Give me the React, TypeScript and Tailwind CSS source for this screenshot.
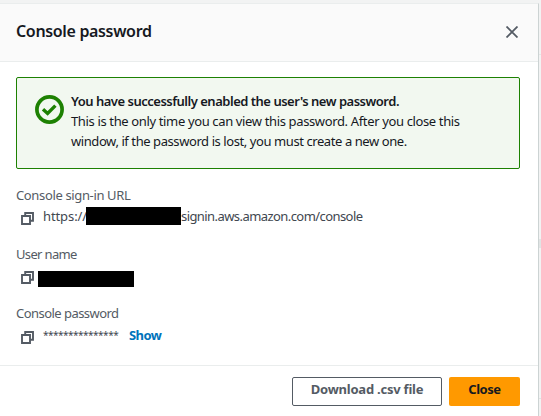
import React from "react";

function CopyIcon() {
  return (
    <svg width="13" height="13" viewBox="0 0 13 13" fill="none" stroke="#545b64" strokeWidth="1.9" className="shrink-0">
      <path d="M1 4h8v8H1z" />
      <path d="M4.2 4V1H12v7.8H9" />
    </svg>
  );
}

function Field({ label, tracking, children }: { label: string; tracking: string; children: React.ReactNode }) {
  return (
    <div className="h-[59px]">
      <div className={`h-5 whitespace-nowrap text-[13px] leading-5 text-[#545b64] ${tracking}`}>{label}</div>
      <div className="flex h-[26px] pl-[5px]">{children}</div>
    </div>
  );
}

export default function App() {
  return (
    <div className="flex h-[416px] w-[541px] overflow-hidden bg-[#f2f3f3] pt-[3px] font-['Noto_Sans','Open_Sans',sans-serif]">
      <div className="flex w-[539px] shrink-0 flex-col border-t border-r border-t-[#eaeded] border-r-[#ccd3d3] bg-white">
        <header className="flex h-[58px] shrink-0 items-start justify-between border-b border-[#eaeded] bg-[#fafafa] pl-4 pr-[20px]">
          <h1 className="mt-[15px] text-[16px] font-semibold leading-6 tracking-[-0.34px] text-[#16191f]">Console password</h1>
          <svg width="12" height="12" viewBox="0 0 12 12" stroke="#545b64" strokeWidth="1.8" className="mt-[22px]">
            <path d="M.5.5l11 11M11.5.5l-11 11" />
          </svg>
        </header>
        <main className="h-[303px] shrink-0 px-4 pt-[15px]">
          <section className="flex h-[92px] w-[504px] rounded-[2px] border border-[#1d8102] bg-[#f2f8f0] pl-[18px] pt-[13px]">
            <svg width="29" height="29" viewBox="0 0 29 29" fill="none" stroke="#1d8102" className="mt-[4px] shrink-0">
              <circle cx="14.5" cy="14.5" r="12.6" strokeWidth="3.7" />
              <path d="M8 14.2l4.6 4.2 7.8-7.8" strokeWidth="3.4" />
            </svg>
            <div className="ml-[7px] whitespace-nowrap text-[13px] leading-5 text-[#16191f]">
              <p className="font-semibold tracking-[-0.49px]">You have successfully enabled the user's new password.</p>
              <p className="tracking-[-0.36px]">This is the only time you can view this password. After you close this</p>
              <p className="tracking-[-0.42px]">window, if the password is lost, you must create a new one.</p>
            </div>
          </section>
          <div className="pt-[16px] text-[13px] leading-5">
            <Field label="Console sign-in URL" tracking="tracking-[-0.36px]">
              <div className="pt-[7px]"><CopyIcon /></div>
              <span className="ml-[9px] mt-[1px] w-[43px] whitespace-nowrap tracking-[-0.1px] text-[#414750]">https://</span>
              <span className="mt-[2px] h-[18px] w-[95px] bg-black" />
              <span className="mt-[1px] whitespace-nowrap tracking-[-0.57px] text-[#414750]">signin.aws.amazon.com/console</span>
            </Field>
            <Field label="User name" tracking="tracking-[-0.65px]">
              <div className="pt-[7px]"><CopyIcon /></div>
              <span className="ml-[4px] mt-[7px] h-4 w-24 bg-black" />
            </Field>
            <Field label="Console password" tracking="tracking-[-0.54px]">
              <div className="pt-[8px]"><CopyIcon /></div>
              <span className="ml-[9px] mt-[2px] w-[86px] whitespace-nowrap text-[10px] leading-5 tracking-[-0.5px] text-[#414750]">***************</span>
              <span className="mt-[2px] font-bold tracking-[-0.6px] text-[#0073bb]">Show</span>
            </Field>
          </div>
        </main>
        <footer className="flex grow items-start justify-end gap-[7px] border-t border-[#eaeded] pr-[18px] pt-[11px]">
          <button className="h-[29px] w-[150px] rounded-[2px] border border-[#545b64] pb-[5px] text-[13px] font-bold leading-5 tracking-[-0.23px] text-[#545b64]">Download .csv file</button>
          <button className="h-[29px] w-[71px] rounded-[2px] bg-[#ff9900] pb-[5px] text-[13px] font-bold leading-5 tracking-[-0.45px] text-[#16191f]">Close</button>
        </footer>
      </div>
      <aside className="w-[2px] pt-[51px]">
        <div className="h-[185px] border-t border-[#e4e7e7]" />
        <div className="h-[9px] bg-[#e0e4e4]" />
        <div className="mt-[150px] border-t border-[#dfe3e3]" />
      </aside>
    </div>
  );
}
